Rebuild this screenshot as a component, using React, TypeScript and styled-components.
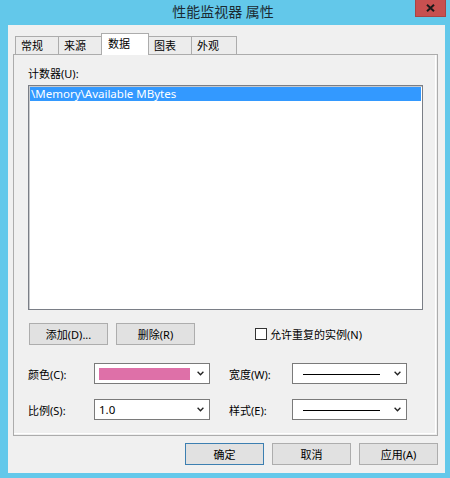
import React from "react";
import styled, { createGlobalStyle } from "styled-components";

const UI_FONT = `"Noto Sans", "Noto Sans CJK SC", sans-serif`;

const Global = createGlobalStyle`
  html, body { margin: 0; padding: 0; background: #62c7ea; }
  body { font-family: ${UI_FONT}; font-size: 11px; color: #000; }
  * { box-sizing: border-box; }
`;

const Window = styled.div`
  width: 450px;
  height: 478px;
  background: #63c8ea;
  display: flex;
  flex-direction: column;
  overflow: hidden;
`;

const TitleBar = styled.div`
  height: 25px;
  flex: none;
  display: grid;
  grid-template-columns: 1fr auto 1fr;
  align-items: center;
  padding-right: 4px;
`;

const Title = styled.div`
  font-size: 14px;
  line-height: 18px;
  color: #1b2b33;
  padding-bottom: 1px;
`;

const CloseButton = styled.div`
  justify-self: end;
  align-self: start;
  width: 31px;
  height: 17px;
  background: #c75050;
  border: 1px solid #a84444;
  border-top: none;
  display: flex;
  align-items: center;
  justify-content: center;
`;

const Client = styled.div`
  flex: 1;
  margin: 0 5px 5px 8px;
  background: #f0f0f0;
  padding: 8px 7px 0 5px;
  display: flex;
  flex-direction: column;
`;

const TabStrip = styled.div`
  display: flex;
  align-items: flex-end;
  height: 22px;
  padding-left: 2px;
  margin-bottom: -1px;
  position: relative;
  z-index: 1;
`;

const Tab = styled.div<{ $active?: boolean; $width: number }>`
  width: ${(p) => p.$width}px;
  height: ${(p) => (p.$active ? 22 : 19)}px;
  margin-left: -1px;
  padding: 0 0 ${(p) => (p.$active ? 3 : 1)}px ${(p) => (p.$active ? 6 : 5)}px;
  border: 1px solid #acacac;
  border-bottom: ${(p) => (p.$active ? "none" : "1px solid #acacac")};
  background: ${(p) => (p.$active ? "#ffffff" : "#ececec")};
  display: flex;
  align-items: center;
  font-size: 11px;
  position: relative;
  z-index: ${(p) => (p.$active ? 2 : 1)};
  &:first-child { margin-left: 0; }
`;

const Panel = styled.div`
  width: 425px;
  height: 382px;
  border: 1px solid #acacac;
  background: #f0f0f0;
  box-shadow: inset -1px -1px 0 #f0f0f0, inset -2px -2px 0 #ffffff;
  padding: 11px 14px 0 14px;
  display: flex;
  flex-direction: column;
`;

const FieldLabel = styled.div`
  height: 16px;
  line-height: 16px;
  margin-bottom: 3px;
`;

const ListBox = styled.div`
  height: 225px;
  background: #fff;
  border: 1px solid #7a7e86;
  box-shadow: inset 1px 1px 0 #c8cacd;
  padding: 1px;
`;

const ListItem = styled.div<{ $selected?: boolean }>`
  height: 14px;
  line-height: 14px;
  padding-left: 1px;
  font-size: 11.5px;
  background: ${(p) => (p.$selected ? "#3399ff" : "transparent")};
  color: ${(p) => (p.$selected ? "#fff" : "#000")};
  white-space: nowrap;
`;

const ActionRow = styled.div`
  margin-top: 13px;
  display: flex;
  align-items: center;
  gap: 8px;
  padding-left: 1px;
`;

const PushButton = styled.div<{ $default?: boolean }>`
  width: 79px;
  height: 22px;
  background: #e1e1e1;
  border: 1px solid ${(p) => (p.$default ? "#3c7fb1" : "#adadad")};
  display: flex;
  align-items: center;
  justify-content: center;
  font-size: 11px;
  padding-bottom: 1px;
`;

const CheckLabel = styled.label`
  margin-left: 52px;
  display: flex;
  align-items: center;
  gap: 3px;
`;

const CheckBox = styled.span`
  width: 12px;
  height: 12px;
  border: 1px solid #333;
  background: #fff;
`;

const PropGrid = styled.div`
  margin-top: 18px;
  display: grid;
  grid-template-columns: 66px 116px 82px 115px;
  grid-auto-rows: 21px;
  row-gap: 15px;
  align-items: center;
`;

const PropLabel = styled.div<{ $indent?: number }>`
  padding-left: ${(p) => p.$indent ?? 0}px;
`;

const Combo = styled.div`
  height: 21px;
  background: #fff;
  border: 1px solid #7a7a7a;
  display: flex;
  align-items: center;
  padding: 0 5px 0 4px;
`;

const Swatch = styled.div<{ $color: string }>`
  width: 91px;
  height: 12px;
  background: ${(p) => p.$color};
`;

const LineSample = styled.div`
  width: 77px;
  height: 1px;
  margin-left: 6px;
  background: #000;
  margin-top: 1px;
`;

const ComboText = styled.span`
  line-height: 14px;
  font-size: 11.5px;
`;

const ChevronBox = styled.span`
  margin-left: auto;
  display: flex;
  align-items: center;
`;

const DialogButtons = styled.div`
  margin-top: 7px;
  display: flex;
  justify-content: flex-end;
  gap: 8px;
`;

const Chevron = () => (
  <ChevronBox>
    <svg width="7" height="5" viewBox="0 0 7 5">
      <path d="M0.6 0.8 L3.5 3.8 L6.4 0.8" fill="none" stroke="#222" strokeWidth="1.3" />
    </svg>
  </ChevronBox>
);

const tabs = [
  { label: "常规", width: 44 },
  { label: "来源", width: 44 },
  { label: "数据", width: 48, active: true },
  { label: "图表", width: 44 },
  { label: "外观", width: 46 },
];

export default function App() {
  return (
    <>
      <Global />
      <Window>
        <TitleBar>
          <span />
          <Title>性能监视器 属性</Title>
          <CloseButton>
            <svg width="9" height="8" viewBox="0 0 9 8">
              <path d="M1 0.8 L8 7.2 M8 0.8 L1 7.2" stroke="#1a1a1a" strokeWidth="2" />
            </svg>
          </CloseButton>
        </TitleBar>
        <Client>
          <TabStrip>
            {tabs.map((t) => (
              <Tab key={t.label} $active={t.active} $width={t.width}>
                {t.label}
              </Tab>
            ))}
          </TabStrip>
          <Panel>
            <FieldLabel>计数器(U):</FieldLabel>
            <ListBox>
              <ListItem $selected>\Memory\Available MBytes</ListItem>
            </ListBox>
            <ActionRow>
              <PushButton>添加(D)...</PushButton>
              <PushButton>删除(R)</PushButton>
              <CheckLabel>
                <CheckBox />
                允许重复的实例(N)
              </CheckLabel>
            </ActionRow>
            <PropGrid>
              <PropLabel>颜色(C):</PropLabel>
              <Combo>
                <Swatch $color="#de70a8" />
                <Chevron />
              </Combo>
              <PropLabel $indent={19}>宽度(W):</PropLabel>
              <Combo>
                <LineSample />
                <Chevron />
              </Combo>
              <PropLabel>比例(S):</PropLabel>
              <Combo>
                <ComboText>1.0</ComboText>
                <Chevron />
              </Combo>
              <PropLabel $indent={19}>样式(E):</PropLabel>
              <Combo>
                <LineSample />
                <Chevron />
              </Combo>
            </PropGrid>
          </Panel>
          <DialogButtons>
            <PushButton $default>确定</PushButton>
            <PushButton>取消</PushButton>
            <PushButton>应用(A)</PushButton>
          </DialogButtons>
        </Client>
      </Window>
    </>
  );
}
